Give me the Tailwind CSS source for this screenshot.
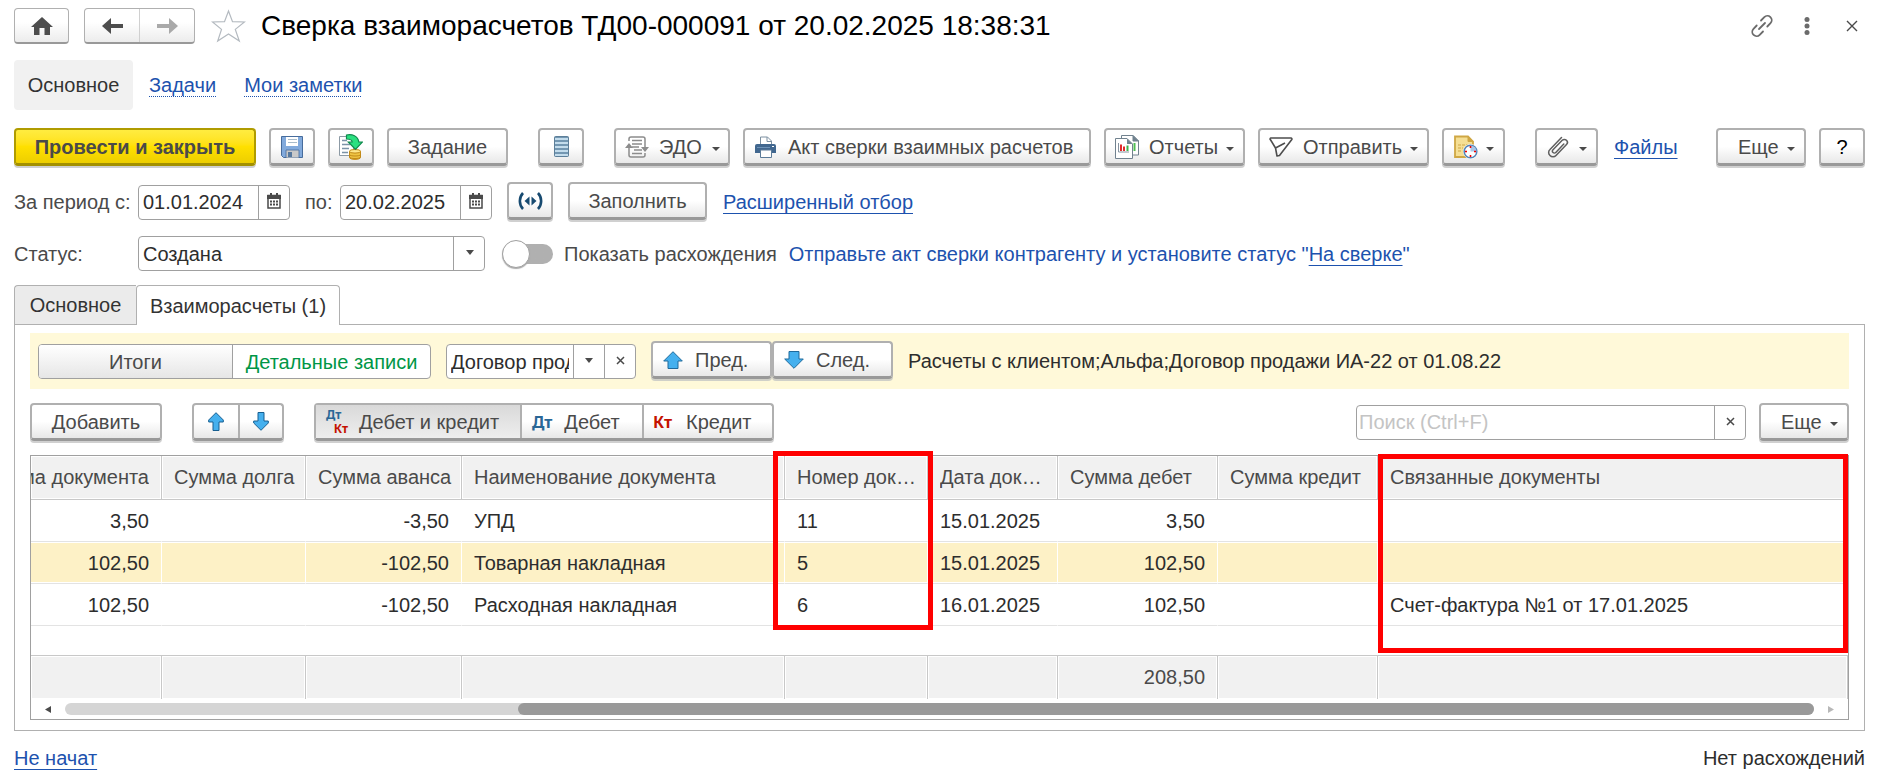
<!DOCTYPE html>
<html lang="ru">
<head>
    <meta charset="UTF-8">
    <meta name="viewport" content="width=device-width, initial-scale=1.0">
    <title>Сверка взаиморасчетов ТД00-000091 от 20.02.2025 18:38:31</title>
    <script src="https://cdn.jsdelivr.net/npm/@tailwindcss/browser@4"></script>
</head>
<body class="bg-white pt-2 pr-6 pl-[14px] font-['Liberation_Sans',Arial,sans-serif] text-[20px] leading-7 text-[#4a4a4a] [text-decoration-skip-ink:none]">

    <!-- Заголовок окна -->
    <header class="flex h-9 items-center">
        <button type="button" aria-label="Домой" class="flex h-9 w-[55px] items-center justify-center rounded border border-b-2 border-[#b0b0b0] border-b-[#999] bg-linear-to-b from-white from-40% to-[#ececec]">
            <svg class="h-[18px] w-[22px]" viewBox="0 0 22 18" fill="#4d4d4d"><path d="M11 0L22 10h-3v8h-5.500v-7h-5v7H3v-8H0z"/></svg>
        </button>
        <div class="ml-[15px] flex h-9 w-[111px] rounded border border-b-2 border-[#b0b0b0] border-b-[#999] bg-linear-to-b from-white from-40% to-[#ececec]">
            <button type="button" aria-label="Назад" class="flex flex-1 items-center justify-center border-r border-[#d0d0d0]">
                <svg class="h-4 w-[21px]" viewBox="0 0 21 16" fill="#4d4d4d"><path d="M0 8L9 0v6h12v4H9v6z"/></svg>
            </button>
            <button type="button" aria-label="Вперед" class="flex flex-1 items-center justify-center">
                <svg class="h-4 w-[21px]" viewBox="0 0 21 16" fill="#a9a9a9"><path d="M21 8L12 0v6H0v4h12v6z"/></svg>
            </button>
        </div>
        <button type="button" aria-label="В избранное" class="ml-4">
            <svg class="h-[34px] w-[35px]" viewBox="0 0 35 34" fill="#fff" stroke="#b4bac0" stroke-width="1.2"><path d="M17.500 2L21.500 12.700 33.500 13 24.300 20.400 28.300 32 17.500 25 6.700 32 10.500 20.400 1.500 13 13.500 12.700z"/></svg>
        </button>
        <h1 class="ml-[15px] text-[28px] leading-9 whitespace-nowrap text-black">Сверка взаиморасчетов ТД00-000091 от 20.02.2025 18:38:31</h1>
        <div class="mr-[7px] ml-auto flex items-center gap-[30px]">
            <button type="button" aria-label="Получить ссылку">
                <svg class="h-6 w-6" viewBox="0 0 24 24" fill="none" stroke="#6b6b6b" stroke-width="1.800" stroke-linecap="round"><path d="M9 15l6-6M11 6.500l3.300-3.300a4.200 4.200 0 0 1 6.200 6L17.300 12.500M13 17.500l-3.300 3.300a4.200 4.200 0 0 1-6.200-6L6.700 11.500"/></svg>
            </button>
            <button type="button" aria-label="Меню">
                <svg class="h-5 w-[6px]" viewBox="0 0 6 20" fill="#6b6b6b"><circle cx="3" cy="3.500" r="2.500"/><circle cx="3" cy="10" r="2.500"/><circle cx="3" cy="16.500" r="2.500"/></svg>
            </button>
            <button type="button" aria-label="Закрыть" class="ml-[6px]">
                <svg class="h-3 w-3" viewBox="0 0 12 12" stroke="#4a4a4a" stroke-width="1.400"><path d="M1 1l10 10M11 1L1 11"/></svg>
            </button>
        </div>
    </header>

    <!-- Навигация -->
    <nav class="mt-4 flex h-[50px] items-center">
        <a href="#" class="flex h-[50px] w-[119px] items-center justify-center rounded bg-[#f1f1f1] text-[#333]">Основное</a>
        <a href="#" class="ml-4 text-[#1d52ae] underline decoration-dotted decoration-1 underline-offset-4">Задачи</a>
        <a href="#" class="ml-7 text-[#1d52ae] underline decoration-dotted decoration-1 underline-offset-4">Мои заметки</a>
    </nav>

    <!-- Командная панель -->
    <div class="mt-[18px] flex h-[38px] items-center gap-[13px] whitespace-nowrap">
        <button type="button" class="h-[38px] w-[242px] rounded border-2 border-b-[3px] border-[#b09c00] border-b-[#a39000] bg-linear-to-b from-[#ffec40] via-[#ffe000] to-[#edce00] font-bold shadow-[0_2px_0_#d0d0d0]">Провести и закрыть</button>
        <button type="button" aria-label="Записать" class="flex h-[38px] w-[46px] items-center justify-center rounded border-2 border-b-[3px] border-[#b0b0b0] border-b-[#999] bg-linear-to-b from-white from-50% to-[#e8e8e8] shadow-[0_2px_0_#d0d0d0]">
            <svg class="size-[22px]" viewBox="0 0 22 22"><path d="M.5.500h21v21H2.500l-2-2z" fill="#82aadc" stroke="#476c9c"/><path d="M5 1h12v9H5z" fill="#fff"/><path d="M7 3.500h9M7 6.500h9" stroke="#a9bccb" stroke-width="1"/><path d="M5 14h13v8H5z" fill="#c9c9c9" stroke="#476c9c" stroke-width=".8"/><path d="M7 16h4v5H7z" fill="#56789e"/></svg>
        </button>
        <button type="button" aria-label="Провести" class="flex h-[38px] w-[46px] items-center justify-center rounded border-2 border-b-[3px] border-[#b0b0b0] border-b-[#999] bg-linear-to-b from-white from-50% to-[#e8e8e8] shadow-[0_2px_0_#d0d0d0]">
            <svg class="h-[26px] w-6" viewBox="0 0 24 26"><path d="M.5 2.500h14v19H.5z" fill="#fff" stroke="#8d9aa5"/><path d="M3 6.500h5M3 10.500h8M3 14.500h7M3 18.500h6" stroke="#7b93a8" stroke-width="1.300"/><path d="M10.500 17v6.500c0 2.500 11 2.500 11 0V17z" fill="#efc443" stroke="#c28a18"/><path d="M10.500 20.500c0 2 11 2 11 0M10.500 23c0 2 11 2 11 0" fill="none" stroke="#c28a18"/><ellipse cx="16" cy="17.300" rx="5.500" ry="1.800" fill="#ffe88c" stroke="#c28a18"/><path d="M7.500 1C13 0 19 1.500 19.800 8h3.700l-7 7.500L9.300 8H13.200C13 5.500 11 5 7.500 5z" fill="#2be080" stroke="#118a4e" stroke-width="1.200"/></svg>
        </button>
        <button type="button" class="h-[38px] w-[121px] rounded border-2 border-b-[3px] border-[#b0b0b0] border-b-[#999] bg-linear-to-b from-white from-50% to-[#e8e8e8] shadow-[0_2px_0_#d0d0d0]">Задание</button>
        <button type="button" aria-label="Реестр" class="ml-[17px] flex h-[38px] w-[46px] items-center justify-center rounded border-2 border-b-[3px] border-[#b0b0b0] border-b-[#999] bg-linear-to-b from-white from-50% to-[#e8e8e8] shadow-[0_2px_0_#d0d0d0]">
            <svg class="h-[21px] w-[15px]" viewBox="0 0 15 21"><rect x=".5" y=".5" width="14" height="20" rx="1" fill="#7397b2" stroke="#5d7f99"/><path d="M1 3h13M1 7h13M1 11h13M1 15h13M1 19h13" stroke="#c3dcec" stroke-width="2"/></svg>
        </button>
        <button type="button" class="ml-[17px] flex h-[38px] w-[116px] items-center rounded border-2 border-b-[3px] border-[#b0b0b0] border-b-[#999] bg-linear-to-b from-white from-50% to-[#e8e8e8] pl-[9px] shadow-[0_2px_0_#d0d0d0]">
            <svg class="h-[22px] w-6" viewBox="0 0 24 22" fill="none" stroke="#8c8c8c" stroke-width="1.500"><path d="M4 5V3a2 2 0 0 1 2-2h12a2 2 0 0 1 2 2v8M20 17v2a2 2 0 0 1-2 2H6a2 2 0 0 1-2-2v-7M7 4.500h10M7 8h10M7 11h7M9 14h8M7 17.500h10"/><path d="M0 12l4-5 4 5zM16 11h8l-4 5z" fill="#8c8c8c" stroke="none"/></svg>
            <span class="ml-[10px]">ЭДО</span>
            <svg class="mt-1 ml-[10px] h-1 w-2" viewBox="0 0 8 4" fill="#4a4a4a"><path d="M0 0h8L4 4z"/></svg>
        </button>
        <button type="button" class="flex h-[38px] w-[348px] items-center rounded border-2 border-b-[3px] border-[#b0b0b0] border-b-[#999] bg-linear-to-b from-white from-50% to-[#e8e8e8] pl-[10px] shadow-[0_2px_0_#d0d0d0]">
            <svg class="h-[22px] w-[21px]" viewBox="0 0 21 22"><path d="M5.500 9V1h7l4 4v4" fill="#fff" stroke="#7d90a1"/><path d="M12 1v4.500h4.500" fill="none" stroke="#7d90a1"/><path d="M2 8h17a2 2 0 0 1 2 2v7H0v-7a2 2 0 0 1 2-2z" fill="#41678f"/><path d="M2 11.500h13" stroke="#6e93b8"/><path d="M17 10.500h2" stroke="#fff"/><path d="M5.500 14h11v7.500h-11z" fill="#fff" stroke="#5c7b99"/></svg>
            <span class="ml-3">Акт сверки взаимных расчетов</span>
        </button>
        <button type="button" class="flex h-[38px] w-[141px] items-center rounded border-2 border-b-[3px] border-[#b0b0b0] border-b-[#999] bg-linear-to-b from-white from-50% to-[#e8e8e8] pl-[9px] shadow-[0_2px_0_#d0d0d0]">
            <svg class="h-6 w-6" viewBox="0 0 24 24"><path d="M6.500.500H18l5.500 5.500v14H6.500z" fill="#fff" stroke="#71828f"/><path d="M18 .5V6h5.500z" fill="#71828f" stroke="#71828f"/><path d="M19.500 8v8" stroke="#4fbf53" stroke-width="2"/><path d="M.5 3.500H12l5.500 5.500v14.500H.5z" fill="#fff" stroke="#71828f"/><path d="M12 3.500V9h5.500z" fill="#71828f"/><path d="M3.500 8v9H14" fill="none" stroke="#8794a0"/><path d="M6 9.500V16" stroke="#e02b2b" stroke-width="2"/><path d="M9 11.500V16" stroke="#e02b2b" stroke-width="2"/><path d="M12.500 10.500V16" stroke="#3eb44a" stroke-width="2"/></svg>
            <span class="ml-[10px]">Отчеты</span>
            <svg class="mt-1 ml-2 h-1 w-2" viewBox="0 0 8 4" fill="#4a4a4a"><path d="M0 0h8L4 4z"/></svg>
        </button>
        <button type="button" class="flex h-[38px] w-[171px] items-center rounded border-2 border-b-[3px] border-[#b0b0b0] border-b-[#999] bg-linear-to-b from-white from-50% to-[#e8e8e8] pl-[9px] shadow-[0_2px_0_#d0d0d0]">
            <svg class="h-5 w-6" viewBox="0 0 24 20" fill="none" stroke="#4d4d4d" stroke-width="1.600" stroke-linejoin="round"><path d="M1.500 1h20.500a1 1 0 0 1 .8 1.500L10.500 18.500 8 19 6.500 11 1 2zM6.500 11L16 6"/></svg>
            <span class="ml-[10px]">Отправить</span>
            <svg class="mt-1 ml-2 h-1 w-2" viewBox="0 0 8 4" fill="#4a4a4a"><path d="M0 0h8L4 4z"/></svg>
        </button>
        <button type="button" aria-label="Напоминание" class="flex h-[38px] w-[63px] items-center rounded border-2 border-b-[3px] border-[#b0b0b0] border-b-[#999] bg-linear-to-b from-white from-50% to-[#e8e8e8] pl-[10px] shadow-[0_2px_0_#d0d0d0]">
            <svg class="h-6 w-6" viewBox="0 0 24 24"><path d="M1 1.500h13l5 5V22H1z" fill="#f5df94" stroke="#cfa744" stroke-width="1.800"/><path d="M14 1.500v5h5z" fill="#cfa744" stroke="#cfa744"/><path d="M4 10h10M4 13h5M4 16h4" stroke="#cfa744" stroke-dasharray="3 1"/><circle cx="16.500" cy="16.500" r="7.500" fill="#fff"/><circle cx="16.500" cy="16.500" r="6.300" fill="#fff" stroke="#5485b8" stroke-width="1.600"/><path d="M16.500 16.500v-6a6 6 0 0 1 6 6z" fill="#a8c5e8"/><path d="M16.500 11v2M16.500 20v2M11 16.500h2M20 16.500h2" stroke="#e00" stroke-width="1.600"/></svg>
            <svg class="mt-1 ml-2 h-1 w-2" viewBox="0 0 8 4" fill="#4a4a4a"><path d="M0 0h8L4 4z"/></svg>
        </button>
        <button type="button" aria-label="Прикрепить" class="ml-[17px] flex h-[38px] w-[63px] items-center rounded border-2 border-b-[3px] border-[#b0b0b0] border-b-[#999] bg-linear-to-b from-white from-50% to-[#e8e8e8] pl-[10px] shadow-[0_2px_0_#d0d0d0]">
            <svg class="h-[22px] w-[22px]" viewBox="0 0 22 22" fill="none" stroke="#5f5f5f" stroke-width="1.500" stroke-linecap="round"><path d="M14.500 1.500L3 13.500a4 4 0 0 0 0 6 4 4 0 0 0 6 0L19.500 8.500a2.900 2.900 0 0 0-4.300-4.200L6 13.800a1.900 1.900 0 0 0 2.800 2.700l8-8.500"/></svg>
            <svg class="mt-1 ml-[10px] h-1 w-2" viewBox="0 0 8 4" fill="#4a4a4a"><path d="M0 0h8L4 4z"/></svg>
        </button>
        <a href="#" class="ml-[3px] text-[#1d52ae] underline decoration-1 underline-offset-4">Файлы</a>
        <button type="button" class="ml-auto flex h-[38px] w-[90px] items-center rounded border-2 border-b-[3px] border-[#b0b0b0] border-b-[#999] bg-linear-to-b from-white from-50% to-[#e8e8e8] pl-5 shadow-[0_2px_0_#d0d0d0]">
            Еще
            <svg class="mt-1 ml-2 h-1 w-2" viewBox="0 0 8 4" fill="#4a4a4a"><path d="M0 0h8L4 4z"/></svg>
        </button>
        <button type="button" class="h-[38px] w-[46px] rounded border-2 border-b-[3px] border-[#b0b0b0] border-b-[#999] bg-linear-to-b from-white from-50% to-[#e8e8e8] text-black shadow-[0_2px_0_#d0d0d0]">?</button>
    </div>

    <!-- Период -->
    <div class="mt-4 flex h-[38px] items-end leading-[35px] whitespace-nowrap">
        <label for="date-from" class="w-[124px]">За период с:</label>
        <div class="flex h-[35px] w-[152px] rounded border border-[#a0a0a0]">
            <input id="date-from" type="text" value="01.01.2024" class="w-[120px] border-r border-[#a0a0a0] pl-1 text-[#2d2d2d] outline-none">
            <button type="button" aria-label="Выбрать дату начала" class="flex flex-1 items-center justify-center">
                <svg class="mb-1 h-4 w-[14px]" viewBox="0 0 14 16"><path d="M1 2.500h12v12.500H1z" fill="#fff" stroke="#4a4a4a" stroke-width="1.500"/><path d="M0 2h14v4H0z" fill="#4a4a4a"/><path d="M4 0v4M10 0v4" stroke="#4a4a4a" stroke-width="2"/><path d="M3 8.500h8M3 11.500h8" stroke="#4a4a4a" stroke-width="1.800" stroke-dasharray="2 1"/></svg>
            </button>
        </div>
        <label for="date-to" class="ml-[15px] w-[35px]">по:</label>
        <div class="flex h-[35px] w-[152px] rounded border border-[#a0a0a0]">
            <input id="date-to" type="text" value="20.02.2025" class="w-[120px] border-r border-[#a0a0a0] pl-1 text-[#2d2d2d] outline-none">
            <button type="button" aria-label="Выбрать дату окончания" class="flex flex-1 items-center justify-center">
                <svg class="mb-1 h-4 w-[14px]" viewBox="0 0 14 16"><path d="M1 2.500h12v12.500H1z" fill="#fff" stroke="#4a4a4a" stroke-width="1.500"/><path d="M0 2h14v4H0z" fill="#4a4a4a"/><path d="M4 0v4M10 0v4" stroke="#4a4a4a" stroke-width="2"/><path d="M3 8.500h8M3 11.500h8" stroke="#4a4a4a" stroke-width="1.800" stroke-dasharray="2 1"/></svg>
            </button>
        </div>
        <button type="button" aria-label="Выбрать период" class="ml-[15px] flex h-[38px] w-[46px] items-center justify-center rounded border-2 border-b-[3px] border-[#b0b0b0] border-b-[#999] bg-linear-to-b from-white from-50% to-[#e8e8e8] shadow-[0_2px_0_#d0d0d0]">
            <svg class="h-[18px] w-[25px]" viewBox="0 0 25 18"><path d="M5 1C.8 5.500.8 12.500 5 17M20 1c4.200 4.500 4.200 11.500 0 16" fill="none" stroke="#174a70" stroke-width="2.600"/><path d="M11.500 4.500v9L6.500 9z" fill="#174a70"/><path d="M13.500 4.500v9L18.500 9z" fill="#174a70"/></svg>
        </button>
        <button type="button" class="ml-[15px] h-[38px] w-[139px] rounded border-2 border-b-[3px] border-[#b0b0b0] border-b-[#999] bg-linear-to-b from-white from-50% to-[#e8e8e8] leading-7 shadow-[0_2px_0_#d0d0d0]">Заполнить</button>
        <a href="#" class="ml-4 text-[#1d52ae] underline decoration-1 underline-offset-4">Расширенный отбор</a>
    </div>

    <!-- Статус -->
    <div class="mt-4 flex h-[35px] items-center whitespace-nowrap">
        <label for="status" class="w-[124px]">Статус:</label>
        <div class="relative h-[35px] w-[347px]">
            <select id="status" class="h-full w-full appearance-none rounded border border-[#a0a0a0] bg-white pl-1 text-[#2d2d2d] outline-none">
                <option>Создана</option>
            </select>
            <span class="pointer-events-none absolute inset-y-0 right-0 flex w-8 items-center justify-center border-l border-[#a0a0a0]">
                <svg class="mb-[2px] h-[5px] w-2" viewBox="0 0 8 5" fill="#4a4a4a"><path d="M0 0h8L4 5z"/></svg>
            </span>
        </div>
        <input id="show-diff" type="checkbox" class="relative ml-[17px] h-5 w-[51px] appearance-none rounded-full bg-linear-to-r from-white from-30% to-[#b0b0b0] to-30% before:absolute before:-top-1 before:left-0 before:size-7 before:rounded-full before:border before:border-[#a0a0a0] before:bg-white before:shadow-[0_1px_1px_#aaa] before:content-['']">
        <label for="show-diff" class="ml-[11px]">Показать расхождения</label>
        <p class="ml-3 text-[#1d52ae]">Отправьте акт сверки контрагенту и установите статус "<a href="#" class="underline decoration-1 underline-offset-4">На сверке</a>"</p>
    </div>

    <!-- Вкладки -->
    <div role="tablist" class="relative z-10 mt-[14px] -mb-px flex h-10 text-[#333]">
        <button type="button" role="tab" class="w-[122px] rounded-tl border border-r-0 border-[#b0b0b0] bg-[#ebebeb]">Основное</button>
        <button type="button" role="tab" aria-selected="true" class="w-[204px] rounded-t border border-b-0 border-[#b0b0b0] bg-white">Взаиморасчеты (1)</button>
    </div>

    <main class="border border-[#b0b0b0] px-[15px] pt-2 pb-[10px]">

        <div class="flex h-14 items-end bg-[#fff9d9] pb-[10px] pl-2 whitespace-nowrap">
            <div class="flex h-[35px] w-[393px] overflow-hidden rounded border border-[#a0a0a0] bg-white">
                <button type="button" class="w-[194px] border-r border-[#a0a0a0] bg-linear-to-b from-white to-[#e6e6e6]">Итоги</button>
                <button type="button" class="flex-1 text-[#009646]">Детальные записи</button>
            </div>
            <div class="ml-[15px] flex h-[35px] w-[190px] overflow-hidden rounded border border-[#a0a0a0] bg-white">
                <input type="text" aria-label="Договор" value="Договор продажи" class="w-[122px] pl-1 text-[#2d2d2d] outline-none">
                <button type="button" aria-label="Открыть список" class="ml-1 flex w-[31px] items-center justify-center border-l border-[#a0a0a0]">
                    <svg class="mb-[2px] h-[5px] w-2" viewBox="0 0 8 5" fill="#4a4a4a"><path d="M0 0h8L4 5z"/></svg>
                </button>
                <button type="button" aria-label="Очистить" class="flex flex-1 items-center justify-center border-l border-[#a0a0a0]">
                    <svg class="mb-[2px] size-[9px]" viewBox="0 0 9 9" stroke="#4a4a4a" stroke-width="1.500"><path d="M1 1l7 7M8 1L1 8"/></svg>
                </button>
            </div>
            <button type="button" class="ml-[15px] flex h-[38px] w-[121px] items-center rounded border-2 border-b-[3px] border-[#b0b0b0] border-b-[#999] bg-linear-to-b from-white from-50% to-[#e8e8e8] pl-[10px] shadow-[0_2px_0_#d0d0c8]">
                <svg class="h-[18px] w-5" viewBox="0 0 20 18" fill="#45b0ee" stroke="#1f6a9c"><path d="M10 .7L19.300 10H15v7.500H5V10H.7z"/></svg>
                <span class="ml-3">Пред.</span>
            </button>
            <button type="button" class="flex h-[38px] w-[121px] items-center rounded border-2 border-b-[3px] border-[#b0b0b0] border-b-[#999] bg-linear-to-b from-white from-50% to-[#e8e8e8] pl-[10px] shadow-[0_2px_0_#d0d0c8]">
                <svg class="h-[18px] w-5" viewBox="0 0 20 18" fill="#45b0ee" stroke="#1f6a9c"><path d="M10 17.300L19.300 8H15V.5H5V8H.7z"/></svg>
                <span class="ml-3">След.</span>
            </button>
            <p class="ml-[15px] leading-[35px] text-[#2d2d2d]">Расчеты с клиентом;Альфа;Договор продажи ИА-22 от 01.08.22</p>
        </div>

        <div class="mt-[14px] flex h-[38px] items-center whitespace-nowrap">
            <button type="button" class="h-[38px] w-[132px] rounded border-2 border-b-[3px] border-[#b0b0b0] border-b-[#999] bg-linear-to-b from-white from-50% to-[#e8e8e8] shadow-[0_2px_0_#d0d0d0]">Добавить</button>
            <div class="ml-[30px] flex h-[38px] w-[92px] rounded border-2 border-b-[3px] border-[#b0b0b0] border-b-[#999] bg-linear-to-b from-white from-50% to-[#e8e8e8] shadow-[0_2px_0_#d0d0d0]">
                <button type="button" aria-label="Переместить вверх" class="flex w-[46px] items-center justify-center border-r-2 border-[#b0b0b0]">
                    <svg class="h-[19px] w-4" viewBox="0 0 16 19" fill="#45b0ee" stroke="#175f91"><path d="M8 .7L15.300 8v2H11v8.500H5V10H.7V8z"/></svg>
                </button>
                <button type="button" aria-label="Переместить вниз" class="flex flex-1 items-center justify-center">
                    <svg class="h-[19px] w-4" viewBox="0 0 16 19" fill="#45b0ee" stroke="#175f91"><path d="M8 18.300L15.300 11V9H11V.5H5V9H.7v2z"/></svg>
                </button>
            </div>
            <div class="ml-[30px] flex h-[38px] w-[460px] rounded border-2 border-b-[3px] border-[#b0b0b0] border-b-[#999] bg-linear-to-b from-white from-50% to-[#e8e8e8] shadow-[0_2px_0_#d0d0d0]">
                <button type="button" class="flex w-[206px] items-center border-r-2 border-[#b0b0b0] bg-linear-to-b from-[#d9d9d9] to-[#eee] pl-[10px]">
                    <span class="flex w-[22px] flex-col font-['Noto_Sans'] text-[12px] leading-[14px] font-bold"><span class="text-left text-[#2a6796]">Дт</span><span class="text-right text-[#c41200]">Кт</span></span>
                    <span class="ml-[11px]">Дебет и кредит</span>
                </button>
                <button type="button" class="flex w-[122px] items-center border-r-2 border-[#b0b0b0] pl-[10px]">
                    <span class="font-['Noto_Sans'] text-[16px] font-bold text-[#2a6796]">Дт</span>
                    <span class="ml-3">Дебет</span>
                </button>
                <button type="button" class="flex flex-1 items-center pl-[9px]">
                    <span class="font-['Noto_Sans'] text-[16px] font-bold text-[#c41200]">Кт</span>
                    <span class="ml-[14px]">Кредит</span>
                </button>
            </div>
            <div class="ml-auto flex h-[35px] w-[390px] rounded border border-[#a0a0a0]">
                <input type="search" aria-label="Поиск" placeholder="Поиск (Ctrl+F)" class="min-w-0 flex-1 pl-[2px] outline-none placeholder:text-[#c4c4c4]">
                <button type="button" aria-label="Очистить поиск" class="flex w-[31px] items-center justify-center border-l border-[#a0a0a0]">
                    <svg class="mb-[2px] size-[9px]" viewBox="0 0 9 9" stroke="#4a4a4a" stroke-width="1.500"><path d="M1 1l7 7M8 1L1 8"/></svg>
                </button>
            </div>
            <button type="button" class="ml-[13px] flex h-[38px] w-[90px] items-center rounded border-2 border-b-[3px] border-[#b0b0b0] border-b-[#999] bg-linear-to-b from-white from-50% to-[#e8e8e8] pl-5 shadow-[0_2px_0_#d0d0d0]">
                Еще
                <svg class="mt-1 ml-2 h-1 w-2" viewBox="0 0 8 4" fill="#4a4a4a"><path d="M0 0h8L4 4z"/></svg>
            </button>
        </div>

        <!-- Таблица взаиморасчетов -->
        <div class="relative mt-[14px] border border-[#a0a0a0] pb-1">
            <table class="w-full table-fixed border-separate border-spacing-0 text-[#2d2d2d]">
                <colgroup>
                    <col class="w-[131px]">
                    <col class="w-[144px]">
                    <col class="w-[156px]">
                    <col class="w-[323px]">
                    <col class="w-[143px]">
                    <col class="w-[130px]">
                    <col class="w-[160px]">
                    <col class="w-[160px]">
                    <col>
                </colgroup>
                <thead class="text-left whitespace-nowrap text-[#4a4a4a]">
                    <tr class="h-11 *:border-r *:border-b *:border-[#c8c8c8] *:bg-[#f1f1f1] *:px-3 *:pb-[2px] *:font-normal *:shadow-[inset_0_0_0_1px_#fff]">
                        <th class="overflow-hidden"><div class="-ml-3 flex justify-end overflow-hidden">Сумма документа</div></th>
                        <th>Сумма долга</th>
                        <th>Сумма аванса</th>
                        <th>Наименование документа</th>
                        <th><div class="-mr-2 truncate">Номер документа</div></th>
                        <th><div class="truncate">Дата документа</div></th>
                        <th>Сумма дебет</th>
                        <th>Сумма кредит</th>
                        <th>Связанные документы</th>
                    </tr>
                </thead>
                <tbody>
                    <tr class="h-[42px] *:border-r *:border-b *:border-r-transparent *:border-b-[#e3e3e3] *:px-3">
                        <td class="text-right">3,50</td>
                        <td></td>
                        <td class="text-right">-3,50</td>
                        <td>УПД</td>
                        <td>11</td>
                        <td>15.01.2025</td>
                        <td class="text-right">3,50</td>
                        <td></td>
                        <td></td>
                    </tr>
                    <tr class="h-[42px] *:border-r *:border-b *:border-r-white *:border-b-[#e3e3e3] *:bg-[#fdf1c6] *:px-3 *:shadow-[inset_0_1px_0_#fff,inset_0_-1px_0_#fff]">
                        <td class="text-right">102,50</td>
                        <td></td>
                        <td class="text-right">-102,50</td>
                        <td>Товарная накладная</td>
                        <td>5</td>
                        <td>15.01.2025</td>
                        <td class="text-right">102,50</td>
                        <td></td>
                        <td></td>
                    </tr>
                    <tr class="h-[42px] *:border-r *:border-b *:border-r-transparent *:border-b-[#e3e3e3] *:px-3">
                        <td class="text-right">102,50</td>
                        <td></td>
                        <td class="text-right">-102,50</td>
                        <td>Расходная накладная</td>
                        <td>6</td>
                        <td>16.01.2025</td>
                        <td class="text-right">102,50</td>
                        <td></td>
                        <td>Счет-фактура №1 от 17.01.2025</td>
                    </tr>
                    <tr class="h-[29px]"><td colspan="9"></td></tr>
                </tbody>
                <tfoot class="text-[#4a4a4a]">
                    <tr class="h-11 *:border-t *:border-r *:border-[#c8c8c8] *:bg-[#f1f1f1] *:px-3 *:pb-[2px] *:shadow-[inset_0_0_0_1px_#fff]">
                        <td></td>
                        <td></td>
                        <td></td>
                        <td></td>
                        <td></td>
                        <td></td>
                        <td class="text-right">208,50</td>
                        <td></td>
                        <td></td>
                    </tr>
                </tfoot>
            </table>

            <!-- Горизонтальная прокрутка -->
            <div class="mt-1 flex h-3 items-center px-[14px]">
                <svg class="h-[7px] w-[6px]" viewBox="0 0 6 7" fill="#4a4a4a"><path d="M6 0v7L0 3.500z"/></svg>
                <div class="mx-[14px] flex h-3 flex-1 justify-end rounded-full bg-[#d5d5d5]">
                    <div class="h-3 rounded-full bg-[#999]" style="width: 74.1%"></div>
                </div>
                <svg class="h-[7px] w-[6px]" viewBox="0 0 6 7" fill="#b8b8b8"><path d="M0 0v7l6-3.500z"/></svg>
            </div>

            <!-- Рамки-выделения колонок -->
            <div class="pointer-events-none absolute -top-[5px] left-[742px] h-[179px] w-40 border-5 border-[#f00]"></div>
            <div class="pointer-events-none absolute -top-[2px] right-0 left-[1347px] h-[199px] border-5 border-[#f00]"></div>
        </div>
    </main>

    <footer class="mt-[13px] flex items-center justify-between text-[#2d2d2d]">
        <a href="#" class="text-[#1d52ae] underline decoration-1 underline-offset-4">Не начат</a>
        <p>Нет расхождений</p>
    </footer>
</body>
</html>
